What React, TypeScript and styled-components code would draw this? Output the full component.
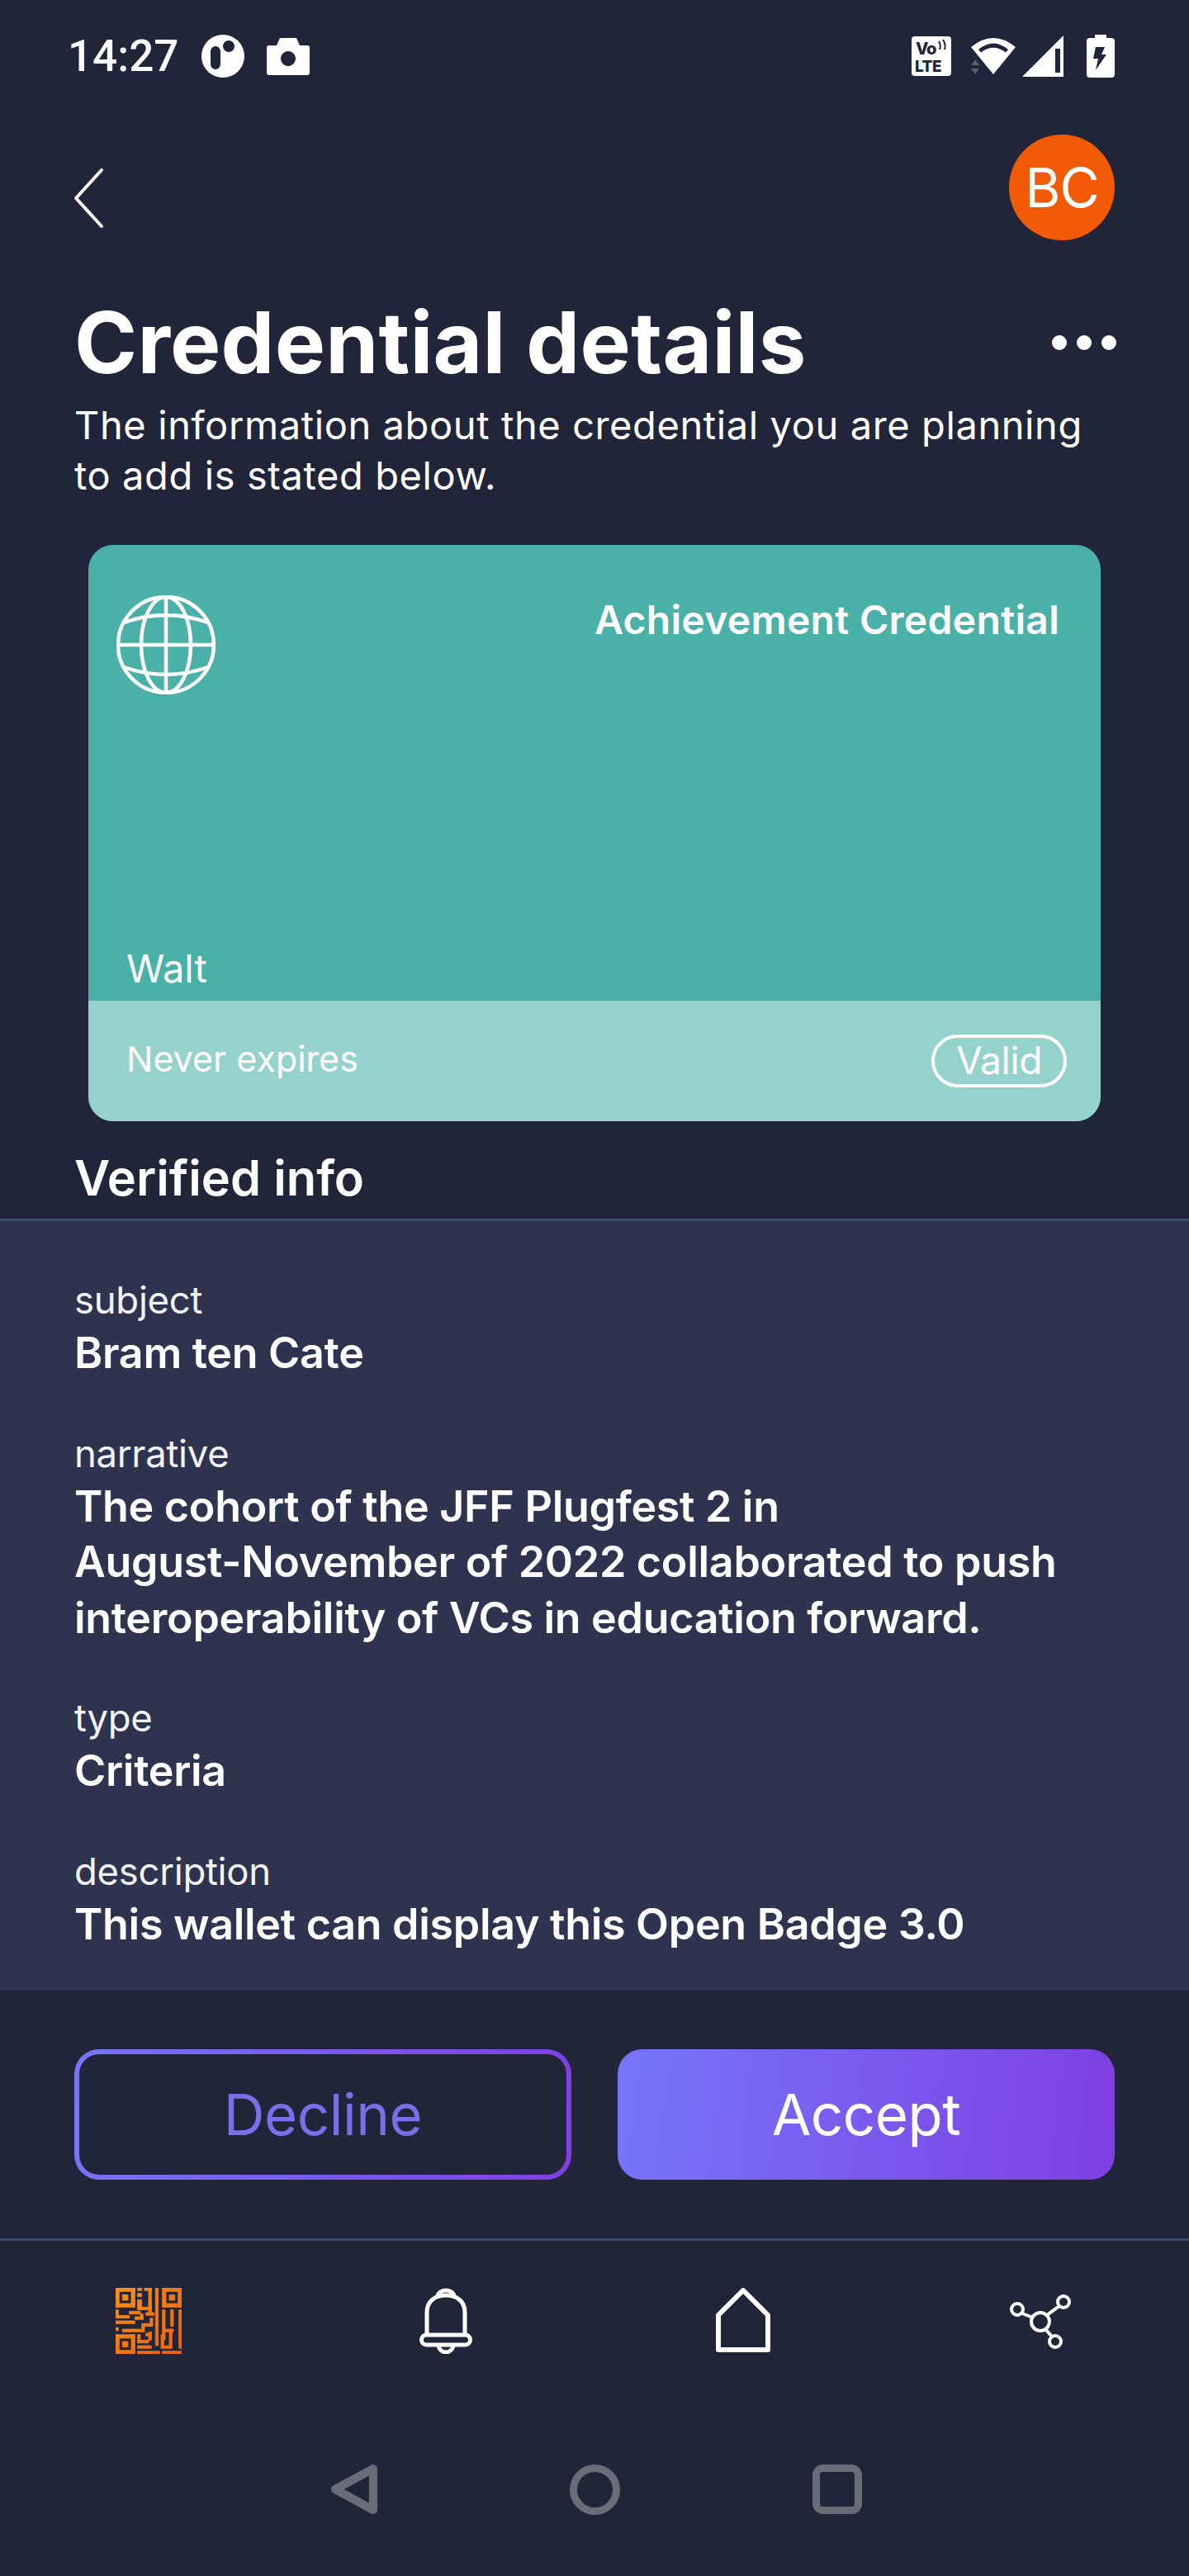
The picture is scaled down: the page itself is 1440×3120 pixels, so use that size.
import React from "react";
import styled, { createGlobalStyle } from "styled-components";

const Global = createGlobalStyle`
  html, body { margin: 0; padding: 0; background: #212539; }
  * { box-sizing: border-box; }
`;

const Page = styled.div`
  width: 1440px;
  height: 3120px;
  overflow: hidden;
  background: #212539;
  color: #fff;
  font-family: Inter, "Liberation Sans", sans-serif;
  display: flex;
  flex-direction: column;
`;

const StatusBar = styled.div`
  height: 136px;
  padding: 0 90px 0 82px;
  display: flex;
  align-items: center;
  justify-content: space-between;
`;
const StatusGroup = styled.div`
  display: flex;
  align-items: center;
`;
const Time = styled.span`
  font-family: Roboto, sans-serif;
  font-weight: 500;
  font-size: 53px;
  line-height: 54px;
  width: 162px;
`;
const CameraIcon = styled.svg`
  margin-left: 27px;
`;
const WifiIcon = styled.svg`
  margin-left: 22px;
`;
const SignalIcon = styled.svg`
  margin-left: 6px;
`;
const BatteryIcon = styled.svg`
  margin-left: 28px;
`;
const TopBar = styled.div`
  height: 218px;
  padding: 27px 90px 0;
  display: flex;
  justify-content: space-between;
  align-items: flex-start;
`;
const BackIcon = styled.svg`
  width: 36px;
  height: 72px;
  margin-top: 41px;
`;
const Avatar = styled.div`
  width: 128px;
  height: 128px;
  border-radius: 50%;
  background: #f25a06;
  display: flex;
  align-items: center;
  justify-content: center;
  font-size: 66px;
  letter-spacing: -1px;
`;
const TitleRow = styled.div`
  padding: 0 90px;
  height: 121px;
  display: flex;
  align-items: center;
  justify-content: space-between;
`;
const Title = styled.h1`
  margin: 0;
  font-size: 103px;
  font-weight: 700;
  letter-spacing: 0.2px;
  line-height: 121px;
`;
const Dots = styled.div`
  display: flex;
  gap: 12px;
  margin-right: -2px;
`;
const Dot = styled.span`
  width: 18px;
  height: 18px;
  border-radius: 50%;
  background: #fff;
`;
const Intro = styled.p`
  margin: 9px 90px 0;
  font-size: 47px;
  line-height: 61px;
  letter-spacing: 0.6px;
  white-space: nowrap;
`;
const Card = styled.div`
  margin: 54px 107px 0;
  height: 698px;
  border-radius: 30px;
  overflow: hidden;
  background: #4ab1a8;
  display: flex;
  flex-direction: column;
`;
const CardMain = styled.div`
  height: 552px;
  padding: 61px 50px 0 34px;
  display: flex;
  flex-wrap: wrap;
  justify-content: space-between;
  align-items: flex-start;
  align-content: flex-start;
`;
const Globe = styled.svg`
  width: 120px;
  height: 120px;
`;
const CardTitle = styled.div`
  font-size: 48px;
  font-weight: 600;
  line-height: 60px;
  letter-spacing: 0.3px;
`;
const Issuer = styled.div`
  width: 100%;
  padding-left: 12px;
  font-size: 47px;
  line-height: 60px;
  margin-top: 302px;
`;
const CardFooter = styled.div`
  flex: 1;
  background: #96d2cc;
  padding: 0 41px 0 46px;
  display: flex;
  align-items: center;
  justify-content: space-between;
  font-size: 43px;
`;
const Expiry = styled.span`
  margin-bottom: 6px;
`;
const Pill = styled.div`
  width: 164px;
  height: 64px;
  border: 4px solid #fff;
  border-radius: 32px;
  padding-bottom: 3px;
  display: flex;
  align-items: center;
  justify-content: center;
  font-size: 46px;
  letter-spacing: -0.3px;
`;
const SectionTitle = styled.h2`
  margin: 36px 90px 0;
  font-size: 59.500px;
  line-height: 64px;
  font-weight: 600;
`;
const Sheet = styled.div`
  margin-top: 18px;
  height: 934px;
  background: #2e3350;
  border-top: 3px solid #3f4a72;
  padding: 66px 90px 0;
`;
const Field = styled.div`
  margin-bottom: 58px;
`;
const Label = styled.div`
  font-size: 45.500px;
  line-height: 60px;
  letter-spacing: -0.3px;
  color: #f2f3f7;
`;
const Value = styled.div`
  font-size: 52px;
  line-height: 67.5px;
  font-weight: 600;
  letter-spacing: -0.3px;
  white-space: nowrap;
`;
const Actions = styled.div`
  padding: 72px 90px 0;
  height: 301px;
  display: grid;
  grid-template-columns: 602px 602px;
  justify-content: space-between;
  align-content: start;
`;
const ActionButton = styled.div<{ $filled?: boolean }>`
  height: 158px;
  border-radius: 30px;
  display: flex;
  align-items: center;
  justify-content: center;
  font-size: 69px;
  letter-spacing: -0.5px;
  color: ${(p) => (p.$filled ? "#fff" : "#7b6ee8")};
  border: ${(p) => (p.$filled ? "0" : "6px solid transparent")};
  background: ${(p) =>
    p.$filled
      ? "linear-gradient(97deg, #7676f9, #7f3fe3)"
      : "linear-gradient(#212539, #212539) padding-box, linear-gradient(97deg, #7676f9, #7f3fe3) border-box"};
`;
const TabBar = styled.div`
  border-top: 3px solid #3a4c6c;
  height: 220px;
  padding-top: 57px;
  display: grid;
  grid-template-columns: repeat(4, 360px);
  justify-items: center;
  align-items: start;
`;
const ShareIcon = styled.svg`
  margin-top: 5px;
`;
const NavBar = styled.div`
  display: flex;
  justify-content: center;
  gap: 233px;
  align-items: center;
  height: 62px;
  margin: 53px 0 0 4px;
`;

const qrRects: [number, number, number, number][] = [
  [0, 0, 7, 1.3], [0, 5.7, 7, 1.3], [0, 0, 1.3, 7], [5.7, 0, 1.3, 7], [2.5, 2.5, 2, 2],
  [17, 0, 7, 1.3], [17, 5.7, 7, 1.3], [17, 0, 1.3, 7], [22.7, 0, 1.3, 7], [19.5, 2.5, 2, 2],
  [0, 17, 7, 1.3], [0, 22.7, 7, 1.3], [0, 17, 1.3, 7], [5.7, 17, 1.3, 7], [2.5, 19.5, 2, 2],
  [8, 0, 1.5, 1], [8, 2, 1.5, 1.2], [8, 4.300, 1.5, 2.700],
  [10.500, 0, 2.500, 1], [12, 0, 1, 7], [12, 5, 1, 4],
  [14.500, 0, 1, 21], [8, 7, 5, 1], [5, 8.5, 4, 1], [0, 8, 1, 2.500], [0, 10, 5, 1],
  [0, 12, 7, 1], [7, 10.500, 3, 1], [9, 9.500, 1, 2], [11, 9, 3, 1],
  [0, 14.500, 1, 1], [2.500, 15, 7, 1], [9.500, 13, 1, 3], [10, 13, 3, 1], [12.500, 11, 1, 3],
  [8, 17, 1, 3], [8, 19, 4, 1], [11, 16.500, 2, 1], [12, 16, 1, 3], [8, 21, 5, 1],
  [8, 23, 8, 1], [17, 8, 1, 11], [20, 8, 1, 6], [23, 8, 1, 14],
  [17, 15, 4, 1], [19.500, 15, 1, 7], [16.500, 17, 1, 5], [17, 21, 3, 1], [17, 23, 7, 1],
];

const Qr = () => (
  <svg width="80" height="80" viewBox="0 0 24 24">
    <defs>
      <linearGradient id="qrg" gradientUnits="userSpaceOnUse" x1="0" y1="0" x2="24" y2="24">
        <stop offset="0" stopColor="#f5921a" />
        <stop offset="1" stopColor="#ea5f12" />
      </linearGradient>
    </defs>
    <path
      d={qrRects.map(([x, y, w, h]) => `M${x} ${y}h${w}v${h}h${-w}z`).join("")}
      fill="url(#qrg)"
      stroke="url(#qrg)"
      strokeWidth="0.25"
    />
  </svg>
);

const App = () => (
  <Page>
    <Global />
    <StatusBar>
      <StatusGroup>
        <Time>14:27</Time>
        <svg width="52" height="52" viewBox="0 0 52 52">
          <path fillRule="evenodd" fill="#fff" d="M26 0a26 26 0 1 1 0 52a26 26 0 0 1 0-52zM17 14a6 6 0 0 0-6 6v16a6 6 0 0 0 12 0V20a6 6 0 0 0-6-6zM33 7a7 7 0 1 0 .01 0z" />
        </svg>
        <CameraIcon width="52" height="46" viewBox="0 0 52 46">
          <path fillRule="evenodd" fill="#fff" d="M16 1h20l4 9h9a3 3 0 0 1 3 3v30a3 3 0 0 1-3 3H3a3 3 0 0 1-3-3V13a3 3 0 0 1 3-3h9zM26 17a9 9 0 1 0 .01 0z" />
        </CameraIcon>
      </StatusGroup>
      <StatusGroup>
        <svg width="48" height="48" viewBox="0 0 48 48">
          <rect width="48" height="48" rx="4" fill="#fff" />
          <text x="5" y="22" fontFamily="Inter, sans-serif" fontWeight="800" fontSize="20" fill="#212539" letterSpacing="-1">Vo</text>
          <path d="M33 6q3 5 1 10M38 4q4 6 2 12" stroke="#212539" strokeWidth="2" fill="none" />
          <text x="4" y="43" fontFamily="Inter, sans-serif" fontWeight="800" fontSize="19" fill="#212539" letterSpacing="-0.5">LTE</text>
        </svg>
        <WifiIcon width="58" height="46" viewBox="0 0 58 46">
          <path fillRule="evenodd" fill="#fff" d="M2 12Q29-10 56 12L29 45zM11 15Q29 0 47 15L44 18.500Q29 7 14 18.500z" />
          <path fill="#5d6072" d="M2 34l5-7 5 7zM2 38h10l-5 7z" />
        </WifiIcon>
        <SignalIcon width="50" height="50" viewBox="0 0 50 50">
          <path fillRule="evenodd" fill="#fff" d="M50 0V50H0zM40 16V45H46V16z" />
        </SignalIcon>
        <BatteryIcon width="34" height="52" viewBox="0 0 34 52">
          <path fillRule="evenodd" fill="#fff" d="M10 0h14v4h6a4 4 0 0 1 4 4v40a4 4 0 0 1-4 4H4a4 4 0 0 1-4-4V8a4 4 0 0 1 4-4h6zM11 15l-3 14h6l-3 14 13-19h-6l4-9z" />
        </BatteryIcon>
      </StatusGroup>
    </StatusBar>
    <TopBar>
      <BackIcon viewBox="0 0 36 72">
        <path d="M33 2L2 36l31 34" fill="none" stroke="#fff" strokeWidth="4" strokeLinecap="round" strokeLinejoin="round" />
      </BackIcon>
      <Avatar>BC</Avatar>
    </TopBar>
    <TitleRow>
      <Title>Credential details</Title>
      <Dots>
        <Dot />
        <Dot />
        <Dot />
      </Dots>
    </TitleRow>
    <Intro>
      The information about the credential you are planning
      <br />
      to add is stated below.
    </Intro>
    <Card>
      <CardMain>
        <Globe viewBox="0 0 120 120" fill="none" stroke="#fff" strokeWidth="4.5">
          <circle cx="60" cy="60" r="58" />
          <ellipse cx="60" cy="60" rx="30" ry="58" />
          <path d="M60 2v116M2 60h116M9 33q51-18 102 0M9 87q51 18 102 0" />
        </Globe>
        <CardTitle>Achievement Credential</CardTitle>
        <Issuer>Walt</Issuer>
      </CardMain>
      <CardFooter>
        <Expiry>Never expires</Expiry>
        <Pill>Valid</Pill>
      </CardFooter>
    </Card>
    <SectionTitle>Verified info</SectionTitle>
    <Sheet>
      <Field>
        <Label>subject</Label>
        <Value>Bram ten Cate</Value>
      </Field>
      <Field>
        <Label>narrative</Label>
        <Value>
          The cohort of the JFF Plugfest 2 in
          <br />
          August-November of 2022 collaborated to push
          <br />
          interoperability of VCs in education forward.
        </Value>
      </Field>
      <Field>
        <Label>type</Label>
        <Value>Criteria</Value>
      </Field>
      <Field>
        <Label>description</Label>
        <Value>This wallet can display this Open Badge 3.0</Value>
      </Field>
    </Sheet>
    <Actions>
      <ActionButton>Decline</ActionButton>
      <ActionButton $filled>Accept</ActionButton>
    </Actions>
    <TabBar>
      <Qr />
      <svg width="64" height="80" viewBox="0 0 64 80" fill="none" stroke="#fff" strokeWidth="5">
        <path d="M9 57V30C9 16 19 9 32 9s23 7 23 21v27" />
        <path d="M22 11c0-5 5-8 10-8s10 3 10 8" />
        <rect x="2.500" y="57" width="59" height="12" rx="6" />
        <path d="M23 70c1 5 5 8 9 8s8-3 9-8" />
      </svg>
      <svg width="66" height="78" viewBox="0 0 66 78" fill="none" stroke="#fff" strokeWidth="6" strokeLinejoin="round">
        <path d="M33 3L63 33V75H3V33z" />
      </svg>
      <ShareIcon width="74" height="70" viewBox="0 0 74 70" fill="none" stroke="#fff" strokeWidth="4">
        <circle cx="9" cy="21" r="7" />
        <circle cx="65" cy="12" r="7" />
        <circle cx="55" cy="60" r="7" />
        <circle cx="37" cy="36" r="11" />
        <path d="M15 26l13 5M60 17L45 28M43 45l8 9" />
      </ShareIcon>
    </TabBar>
    <NavBar>
      <svg width="56" height="62" viewBox="0 0 56 62" fill="none" stroke="#6a6d78" strokeWidth="10" strokeLinejoin="round">
        <path d="M51 6V56L5 31z" />
      </svg>
      <svg width="61" height="61" viewBox="0 0 61 61" fill="none" stroke="#6a6d78" strokeWidth="9">
        <circle cx="30.500" cy="30.500" r="26" />
      </svg>
      <svg width="60" height="60" viewBox="0 0 60 60" fill="none" stroke="#6a6d78" strokeWidth="9">
        <rect x="4.500" y="4.500" width="51" height="51" rx="8" />
      </svg>
    </NavBar>
  </Page>
);

export default App;
